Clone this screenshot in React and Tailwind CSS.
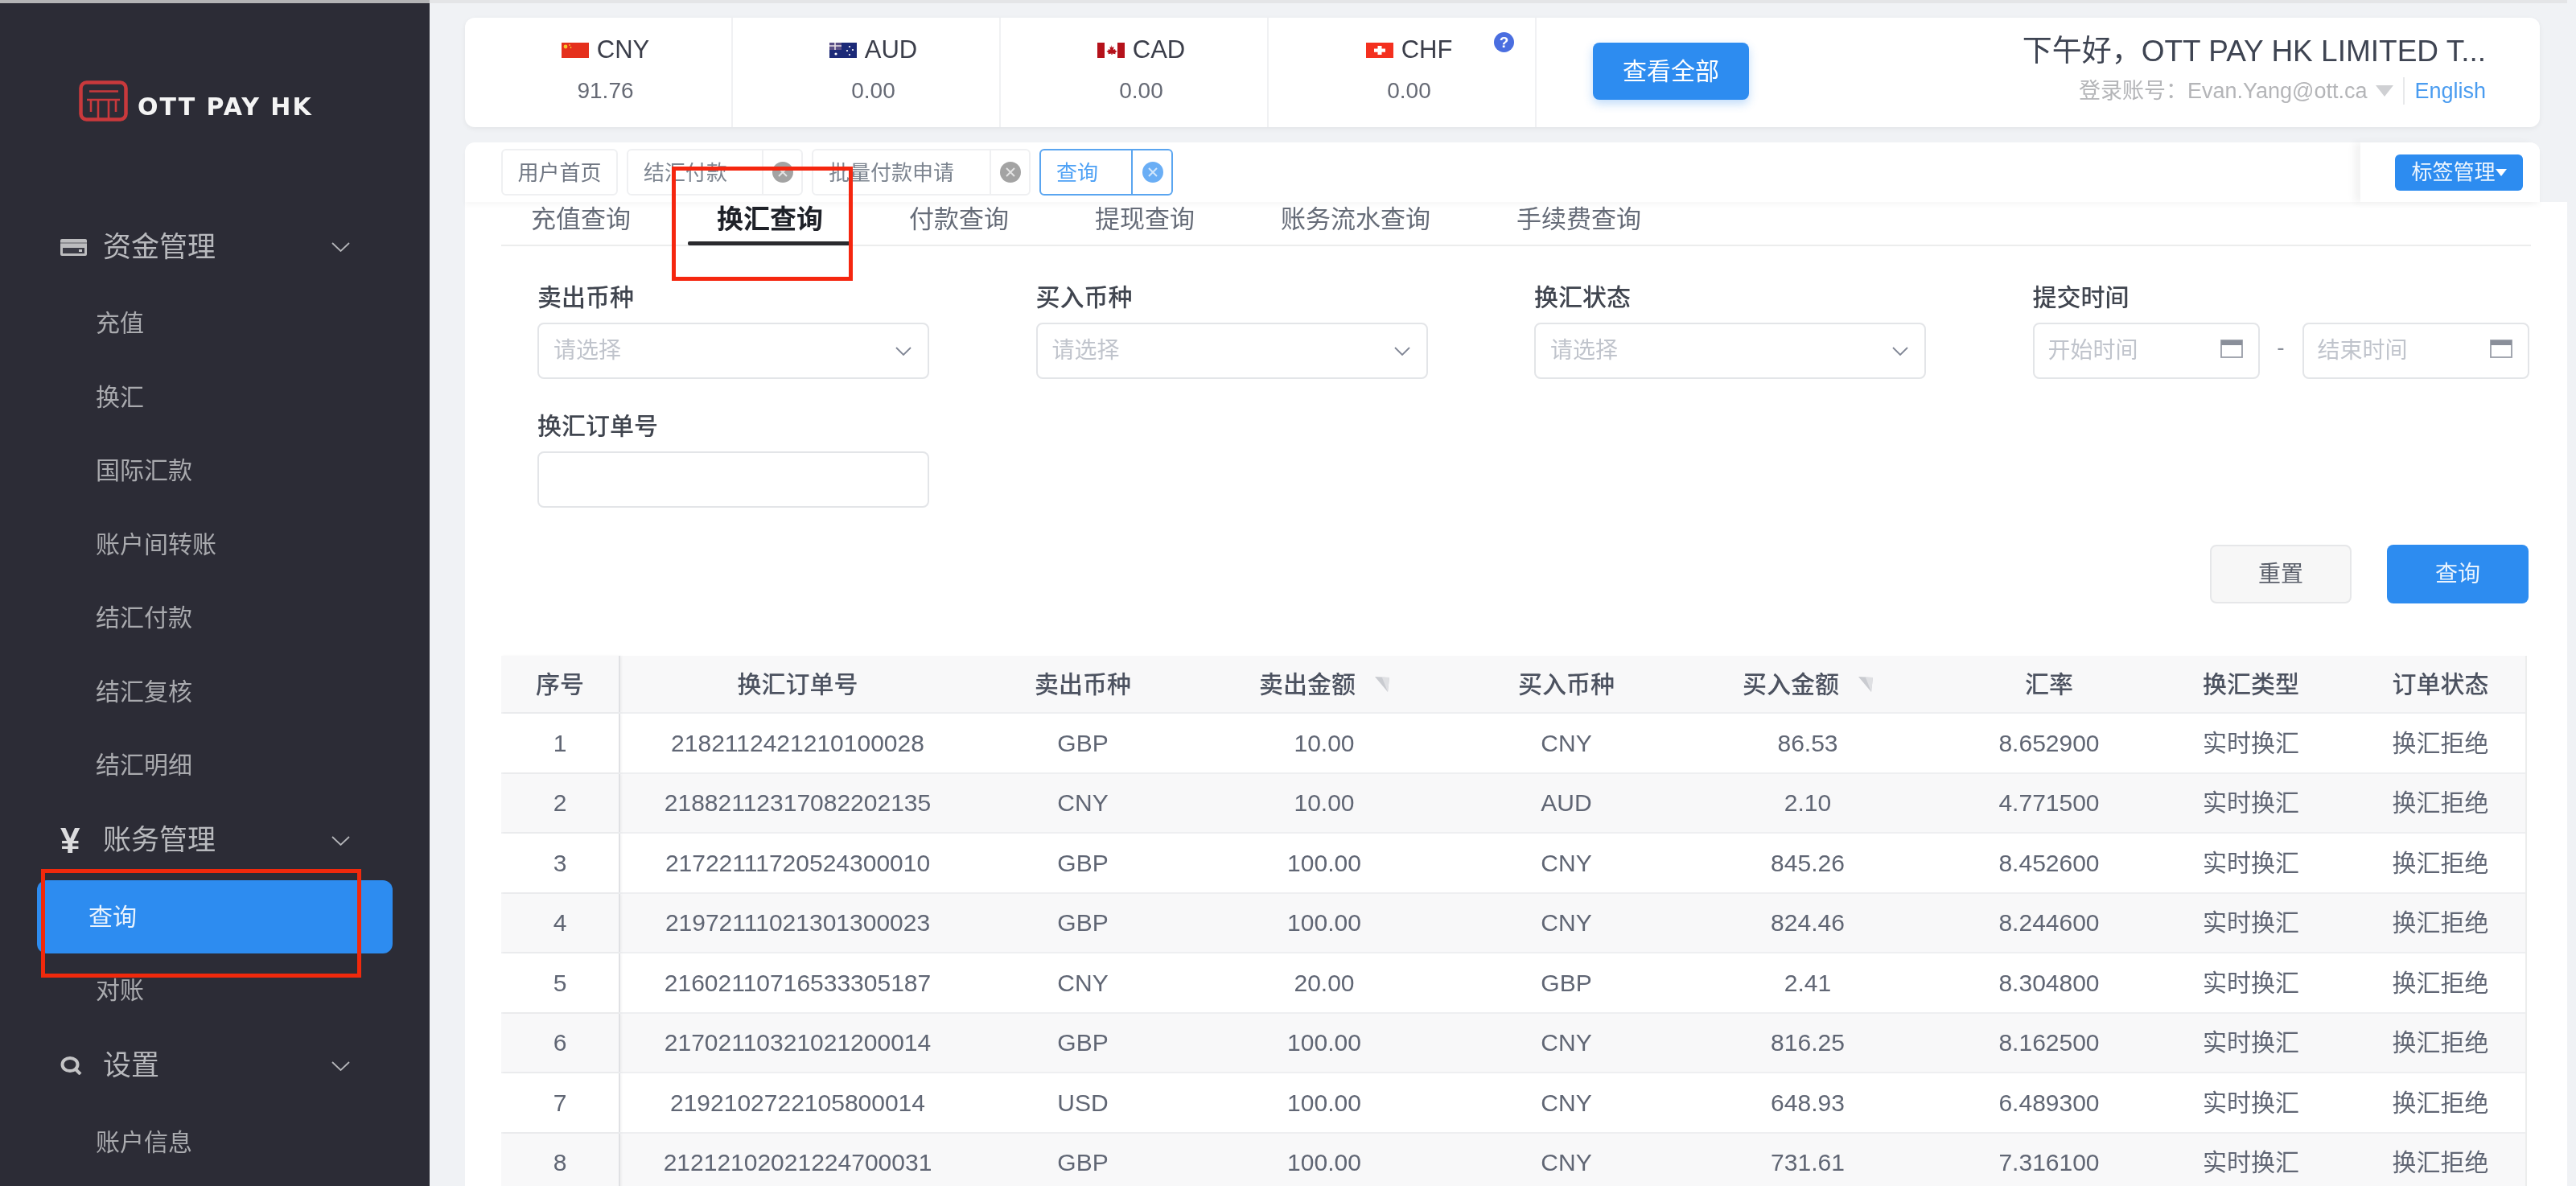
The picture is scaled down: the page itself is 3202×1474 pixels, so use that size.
const FlagCN = () => (
  <svg viewBox="0 0 34 19" className="w-[34px] h-[19px]">
    <rect width="34" height="19" fill="#e5301c" />
    <circle cx="5" cy="5" r="2.4" fill="#f7c52e" />
    <circle cx="10" cy="3" r="0.9" fill="#f7c52e" />
    <circle cx="11.5" cy="6" r="0.9" fill="#f7c52e" />
  </svg>
);

const FlagAU = () => (
  <svg viewBox="0 0 34 19" className="w-[34px] h-[19px]">
    <rect width="34" height="19" fill="#1c2a78" />
    <rect width="15" height="9" fill="#5a4f86" />
    <path d="M0 4h15M7 0v9" stroke="#e8dfe6" strokeWidth="1.6" />
    <circle cx="8" cy="14" r="1.6" fill="#fff" />
    <circle cx="25" cy="5" r="1.1" fill="#fff" />
    <circle cx="29" cy="9" r="1.1" fill="#fff" />
    <circle cx="22" cy="10" r="1.1" fill="#fff" />
    <circle cx="25" cy="15" r="1.1" fill="#fff" />
  </svg>
);

const FlagCA = () => (
  <svg viewBox="0 0 34 19" className="w-[34px] h-[19px]">
    <rect width="34" height="19" fill="#fff" />
    <rect width="9" height="19" fill="#b5121b" />
    <rect x="25" width="9" height="19" fill="#b5121b" />
    <path d="M17 3l1.6 3 2-1-.8 4 2.2-1 .6 2 2 .4-2.4 2.4.4 1.4-4-.6V15h-1.2v-1.4l-4 .6.4-1.4-2.4-2.4 2-.4.6-2 2.2 1-.8-4 2 1z" fill="#b5121b" />
  </svg>
);

const FlagCH = () => (
  <svg viewBox="0 0 34 19" className="w-[34px] h-[19px]">
    <rect width="34" height="19" fill="#f4301f" />
    <path d="M14.5 4h5v3.500H24v4.200h-4.500V15h-5v-3.300H10V7.500h4.500z" fill="#fff" />
  </svg>
);

const currencies = [
  { code: "CNY", value: "91.76", flag: <FlagCN /> },
  { code: "AUD", value: "0.00", flag: <FlagAU /> },
  { code: "CAD", value: "0.00", flag: <FlagCA /> },
  { code: "CHF", value: "0.00", flag: <FlagCH /> },
];

const rows = [
  ["1", "2182112421210100028", "GBP", "10.00", "CNY", "86.53", "8.652900"],
  ["2", "21882112317082202135", "CNY", "10.00", "AUD", "2.10", "4.771500"],
  ["3", "21722111720524300010", "GBP", "100.00", "CNY", "845.26", "8.452600"],
  ["4", "21972111021301300023", "GBP", "100.00", "CNY", "824.46", "8.244600"],
  ["5", "21602110716533305187", "CNY", "20.00", "GBP", "2.41", "8.304800"],
  ["6", "21702110321021200014", "GBP", "100.00", "CNY", "816.25", "8.162500"],
  ["7", "2192102722105800014", "USD", "100.00", "CNY", "648.93", "6.489300"],
  ["8", "21212102021224700031", "GBP", "100.00", "CNY", "731.61", "7.316100"],
];

const gridCols = "grid grid-cols-[148px_441px_268px_332px_270px_330px_270px_232px_227px]";

const Logo = () => (
  <div className="flex pl-[98px] pt-[96px] h-[257px]">
    <svg viewBox="0 0 61 51" className="w-[61px] h-[51px] shrink-0">
      <rect x="2.500" y="2.500" width="56" height="46" rx="7" fill="none" stroke="#c9393c" strokeWidth="4.500" />
      <path d="M13 13.500h36M10 24h41M24 24v25M37 24v25M15 24v15M46 24v15" fill="none" stroke="#c9393c" strokeWidth="2.600" />
    </svg>
    <span className="mt-[13px] ml-[12px] text-[30px] leading-[40px] font-bold text-[#f4f4f4] whitespace-nowrap tracking-[2px] [font-family:'DejaVu_Sans',sans-serif]">OTT PAY HK</span>
  </div>
);

const CardIcon = () => (
  <svg viewBox="0 0 33 21" className="w-[33px] h-[21px]">
    <rect width="33" height="21" rx="2" fill="#bcbcbe" />
    <rect y="4" width="33" height="2" fill="#8e8e92" />
    <rect x="3" y="11" width="27" height="7" fill="#3a3a44" />
    <rect x="23" y="13" width="4" height="3" fill="#c4c4c6" />
  </svg>
);

const SearchIcon = () => (
  <svg viewBox="0 0 27 23" className="w-[27px] h-[23px]">
    <ellipse cx="12" cy="10" rx="9.500" ry="8" fill="none" stroke="#c4c4c6" strokeWidth="4" />
    <path d="M19 16l6 6" stroke="#c4c4c6" strokeWidth="4" />
  </svg>
);

const NavGroup = ({ icon, label, className }) => (
  <div className={"flex items-center h-[92px] mb-[3px] pl-[75px] pr-[99px] text-[#b8b9bd] " + className}>
    <span className="w-[53px] flex items-center justify-start">{icon}</span>
    <span className="text-[35px]">{label}</span>
    <svg viewBox="0 0 23 12" className="w-[23px] h-[12px] ml-auto">
      <path d="M1 1l10.500 10L22 1" fill="none" stroke="#b4b5b9" strokeWidth="1.800" />
    </svg>
  </div>
);

const NavItem = ({ label, active }) =>
  active ? (
    <div className="h-[91.5px] mx-[46px] rounded-[12px] bg-[#2d8cf0] flex items-center pl-[64px] text-[30px] text-[#e9f3fd]">{label}</div>
  ) : (
    <div className="h-[91.5px] flex items-center pl-[119px] text-[30px] text-[#a9aaae]">{label}</div>
  );

const Sidebar = () => (
  <aside className="w-[534px] shrink-0 bg-[#2c2c36] h-[1474px] overflow-hidden border-t-4 border-[#b4b4b6]">
    <Logo />
    <NavGroup icon={<CardIcon />} label="资金管理" />
    {["充值", "换汇", "国际汇款", "账户间转账", "结汇付款", "结汇复核", "结汇明细"].map((t) => (
      <NavItem key={t} label={t} />
    ))}
    <NavGroup icon={<span className="text-[44px] font-bold leading-none text-[#dcdcde]">¥</span>} label="账务管理" className="mt-[2px]" />
    <NavItem label="查询" active />
    <NavItem label="对账" />
    <NavGroup icon={<SearchIcon />} label="设置" className="mt-[2px]" />
    <NavItem label="账户信息" />
  </aside>
);

const TopBar = () => (
  <div className="w-[2579px] h-[136px] bg-white rounded-[12px] shadow-[0_2px_6px_rgba(0,0,0,0.06)] flex">
    {currencies.map((c, i) => (
      <div key={c.code} className="relative w-[333px] pt-[25px] pl-[18px] flex flex-col items-center border-r-2 border-[#f0f1f3]">
        <div className="flex items-center gap-[10px] h-[30px] text-[31px] text-[#3b3e4a]">
          {c.flag}
          {c.code}
        </div>
        <div className="mt-[21px] h-[30px] leading-[30px] text-[28px] text-[#666a75]">{c.value}</div>
        {i === 3 && (
          <span className="absolute top-[18px] right-[26px] w-[25px] h-[25px] rounded-full bg-[#4a6ee0] text-white text-[19px] font-bold leading-[25px] text-center">?</span>
        )}
      </div>
    ))}
    <div className="pl-[70px] pt-[31px]">
      <button className="w-[194px] h-[71px] rounded-[8px] bg-[#2d8cf0] text-white text-[30px] shadow-[0_5px_12px_rgba(45,140,240,0.3)]">查看全部</button>
    </div>
    <div className="flex-1 flex flex-col items-end pr-[67px] pt-[20px]">
      <div className="text-[37px] leading-[44px] text-[#3e4452] whitespace-nowrap">下午好，OTT PAY HK LIMITED T...</div>
      <div className="flex items-center mt-[9px] h-[36px] text-[27px] text-[#b4b5b8] whitespace-nowrap">
        <span>登录账号：Evan.Yang@ott.ca</span>
        <svg viewBox="0 0 22 14" className="w-[22px] h-[14px] ml-[11px]">
          <path d="M0 0h22L11 14z" fill="#cfd0d3" />
        </svg>
        <span className="w-[2px] h-[34px] bg-[#e8e9eb] ml-[12px] mr-[12px]" />
        <span className="text-[#4a9cf0]">English</span>
      </div>
    </div>
  </div>
);

const CloseDot = ({ active }) => (
  <svg viewBox="0 0 26 26" className="w-[26px] h-[26px]">
    <circle cx="13" cy="13" r="13" fill={active ? "#6aaef5" : "#a3a3a3"} />
    <path d="M8 8l10 10M18 8L8 18" stroke="#fff" strokeOpacity="0.7" strokeWidth="2" />
  </svg>
);

const Tag = ({ label, width, textWidth, active }) => (
  <div
    className={
      width +
      " h-[58px] rounded-[6px] flex border-2 text-[26px] " +
      (active ? "border-[#5aa5f0] text-[#4ea1f5]" : "border-[#eff0f2] text-[#7d8590]")
    }
  >
    <span className={textWidth + " flex items-center pl-[19px] pt-[2px] border-r-2 " + (active ? "border-[#5aa5f0]" : "border-[#eff0f2]")}>{label}</span>
    <span className="flex-1 flex items-center justify-center pl-[1px]">
      <CloseDot active={active} />
    </span>
  </div>
);

const TagBar = () => (
  <div className="relative z-10 w-[2579px] h-[74px] mt-[19px] bg-white rounded-t-[12px] flex shadow-[0_4px_6px_rgba(0,0,0,0.03)]">
    <div className="flex-1 flex gap-[11px] pl-[45px] pt-[8px]">
      <div className="w-[145px] h-[58px] rounded-[6px] border-2 border-[#eff0f2] pt-[2px] text-[26px] text-[#6f7682] flex items-center justify-center">用户首页</div>
      <Tag label="结汇付款" width="w-[219px]" textWidth="w-[168px]" />
      <Tag label="批量付款申请" width="w-[272px]" textWidth="w-[221px]" />
      <Tag label="查询" width="w-[166px]" textWidth="w-[114px]" active />
    </div>
    <div className="w-[223px] bg-white rounded-tr-[12px] flex items-center pl-[43px] shadow-[-8px_0_10px_rgba(0,0,0,0.05)]">
      <button className="w-[159px] h-[45px] rounded-[6px] bg-[#2d8cf0] text-[#eef6fe] text-[26px] flex items-center justify-center whitespace-nowrap">
        标签管理
        <svg viewBox="0 0 14 9" className="w-[14px] h-[9px]">
          <path d="M0 0h14L7 9z" fill="#fff" />
        </svg>
      </button>
    </div>
  </div>
);

const Tabs = () => (
  <div className="h-[55px] border-b-2 border-[#eceded] flex items-center gap-[107px] pl-[37px] pb-[9px] text-[31px] text-[#666c78] whitespace-nowrap">
    <span>充值查询</span>
    <span className="relative text-[33px] font-bold text-[#1f2229]">
      换汇查询
      <span className="absolute -left-[36px] -right-[36px] top-[52px] h-[5px] bg-[#2a2a2e] rounded-[2px]" />
    </span>
    <span>付款查询</span>
    <span>提现查询</span>
    <span>账务流水查询</span>
    <span>手续费查询</span>
  </div>
);

const SelectBox = () => (
  <div className="w-[487px] h-[70px] rounded-[8px] border-2 border-[#e3e5e8] flex items-center justify-between pl-[18px] pr-[20px] text-[28px] text-[#c0c4cc]">
    请选择
    <svg viewBox="0 0 20 11" className="w-[20px] h-[11px]">
      <path d="M1 1l9 9 9-9" fill="none" stroke="#808695" strokeWidth="1.800" />
    </svg>
  </div>
);

const CalendarIcon = () => (
  <svg viewBox="0 0 28 23" className="w-[28px] h-[23px]">
    <rect x="1" y="1" width="26" height="21" fill="none" stroke="#9a9ea8" strokeWidth="1.800" />
    <rect x="1" y="1" width="26" height="6" fill="#8a8f9a" />
  </svg>
);

const DateBox = ({ label }) => (
  <div className="w-[282px] h-[70px] rounded-[8px] border-2 border-[#e3e5e8] flex items-center justify-between pl-[17px] pr-[19px] text-[28px] text-[#c0c4cc]">
    {label}
    <span className="-mt-[6px]"><CalendarIcon /></span>
  </div>
);

const Field = ({ label, children }) => (
  <div className="h-[160px]">
    <div className="h-[40px] leading-[40px] text-[30px] font-medium text-[#40454f] mb-[11px]">{label}</div>
    {children}
  </div>
);

const FilterForm = () => (
  <div className="grid grid-cols-[repeat(4,619.5px)] pl-[45px] mt-[44px] h-[281px]">
    <Field label="卖出币种"><SelectBox /></Field>
    <Field label="买入币种"><SelectBox /></Field>
    <Field label="换汇状态"><SelectBox /></Field>
    <Field label="提交时间">
      <div className="flex items-center">
        <DateBox label="开始时间" />
        <span className="w-[53px] text-center text-[28px] text-[#8a8f9a] -mt-[8px]">-</span>
        <DateBox label="结束时间" />
      </div>
    </Field>
    <Field label="换汇订单号">
      <div className="w-[487px] h-[70px] rounded-[8px] border-2 border-[#e3e5e8]" />
    </Field>
  </div>
);

const SortMark = () => (
  <svg viewBox="0 0 18 20" className="w-[18px] h-[20px]">
    <path d="M0 1l18 1-2 18z" fill="#c9cbd0" />
    <path d="M9 2l9 0-2 18z" fill="#dfe0e3" />
  </svg>
);

const headers = ["序号", "换汇订单号", "卖出币种", "卖出金额", "买入币种", "买入金额", "汇率", "换汇类型", "订单状态"];

const Table = () => (
  <div className="mt-[65px] mr-[5px] border-r-2 border-[#eceded] text-[30px] text-[#606674]">
    <div className={gridCols + " h-[72px] bg-[#f8f8f9] border-b-2 border-[#eeeff1] items-center text-center font-medium text-[#4c5260]"}>
      {headers.map((h, i) => (
        <div key={h} className={"h-full flex items-center justify-center gap-[24px] " + (i === 0 ? "border-r-2 border-[#e0e1e4] shadow-[2px_0_3px_rgba(0,0,0,0.04)] " : "") + (i === 8 ? "pl-[12px]" : "")}>
          {h}
          {(i === 3 || i === 5) && <SortMark />}
        </div>
      ))}
    </div>
    {rows.map((r, idx) => (
      <div key={r[0]} className={gridCols + " h-[74.5px] border-b-2 border-[#eeeff1] items-center text-center " + (idx % 2 === 1 ? "bg-[#f8f8f9]" : "bg-white")}>
        <div className="h-full flex items-center justify-center border-r-2 border-[#e0e1e4] shadow-[2px_0_3px_rgba(0,0,0,0.04)]">{r[0]}</div>
        {r.slice(1).map((cell, i) => (
          <div key={i}>{cell}</div>
        ))}
        <div>实时换汇</div>
        <div className="pl-[12px]">换汇拒绝</div>
      </div>
    ))}
  </div>
);

export default function App() {
  return (
    <div className="relative w-[3202px] h-[1474px] overflow-hidden bg-[#f0f2f5] flex blur-[0.7px] [font-family:'Liberation_Sans','Noto_Sans_CJK_SC',sans-serif]">
      <Sidebar />
      <main className="pl-[44px] pt-[18px] border-t-4 border-[#e4e5e7]">
        <TopBar />
        <TagBar />
        <section className="w-[2613px] bg-white pl-[45px] pr-[45px]">
          <Tabs />
          <FilterForm />
          <div className="flex justify-end gap-[44px] mr-[3px] mt-[46px] text-[28px]">
            <button className="w-[176px] h-[73px] rounded-[8px] bg-[#f7f7f7] border-2 border-[#e6e7e9] text-[#5a5f6a]">重置</button>
            <button className="w-[176px] h-[73px] rounded-[8px] bg-[#2d8cf0] text-[#eaf4fe]">查询</button>
          </div>
          <Table />
        </section>
      </main>
      <div className="absolute left-[835px] top-[207px] w-[225px] h-[142px] border-[5px] border-[#f5260f] z-20" />
      <div className="absolute left-[51px] top-[1080px] w-[398px] h-[135px] border-[5px] border-[#f0290c] z-20" />
    </div>
  );
}
